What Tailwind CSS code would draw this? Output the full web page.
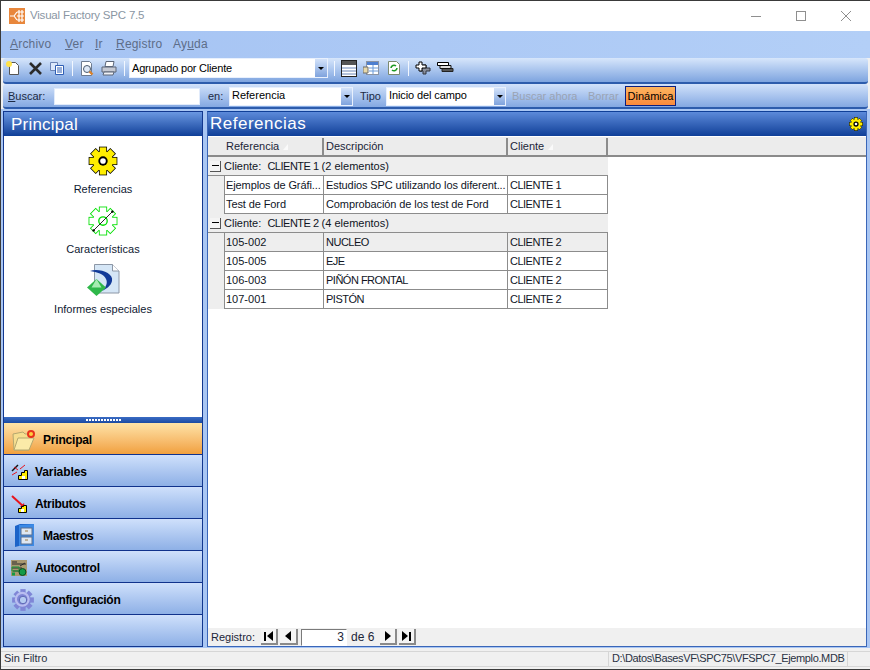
<!DOCTYPE html>
<html lang="es">
<head>
<meta charset="UTF-8">
<title>Visual Factory SPC 7.5</title>
<script src="https://cdn.jsdelivr.net/npm/@tailwindcss/browser@4"></script>
</head>
<body class="font-['Liberation_Sans',sans-serif] text-[11px] text-black bg-[#f0f0f0]">
<svg width="0" height="0" class="absolute">
  <defs>
    <g id="gear">
      <circle cx="16" cy="16" r="10.5"/>
      <rect x="12.5" y="1.5" width="7" height="6"/>
      <rect x="12.5" y="1.5" width="7" height="6" transform="rotate(45 16 16)"/>
      <rect x="12.5" y="1.5" width="7" height="6" transform="rotate(90 16 16)"/>
      <rect x="12.5" y="1.5" width="7" height="6" transform="rotate(135 16 16)"/>
      <rect x="12.5" y="1.5" width="7" height="6" transform="rotate(180 16 16)"/>
      <rect x="12.5" y="1.5" width="7" height="6" transform="rotate(225 16 16)"/>
      <rect x="12.5" y="1.5" width="7" height="6" transform="rotate(270 16 16)"/>
      <rect x="12.5" y="1.5" width="7" height="6" transform="rotate(315 16 16)"/>
    </g>
  </defs>
</svg>
<div class="w-[870px] h-[670px] overflow-hidden flex flex-col border-l border-t border-[#3a3a3a] bg-[#f0f0f0]">

  <!-- title bar -->
  <div class="h-[30px] shrink-0 bg-white flex items-center pl-[8px] pr-[19px]">
    <svg class="w-[16px] h-[16px]" viewBox="0 0 16 16">
      <rect width="16" height="16" fill="#e8873c"/>
      <path d="M1 8h4M5 8l3-4M5 8l3 4M8 4h7M8 8h7M8 12h7M10 2v12M13 2v12" stroke="#fff" stroke-width="1.2" fill="none"/>
    </svg>
    <span class="ml-[5px] text-[11.5px] text-[#8a96a3] tracking-[-0.2px]">Visual Factory SPC 7.5</span>
    <div class="ml-auto flex items-center gap-[35px]">
      <span class="w-[10px] h-px bg-[#8f8f8f]"></span>
      <span class="w-[10px] h-[10px] border border-[#8f8f8f]"></span>
      <svg class="w-[10px] h-[10px]" viewBox="0 0 10 10"><path d="M0 0l10 10M10 0L0 10" stroke="#8f8f8f" fill="none"/></svg>
    </div>
  </div>

  <!-- menu -->
  <div class="h-[27px] shrink-0 pb-[2px] bg-gradient-to-r from-[#a5c3f3] to-[#b3cff7] flex items-center pl-[9px] text-[12px] text-[#5d6d88] tracking-[0.2px]">
    <span class="w-[55px]"><u>A</u>rchivo</span>
    <span class="w-[30px]"><u>V</u>er</span>
    <span class="w-[21px]"><u>I</u>r</span>
    <span class="w-[57px]"><u>R</u>egistro</span>
    <span>Ay<u>u</u>da</span>
  </div>

  <!-- toolbar -->
  <div class="h-[26px] shrink-0 pb-[4px] mx-[2px] rounded-[3px] border-b-2 border-[#2d5cac] bg-gradient-to-b from-[#d7e6fb] to-[#7ea4df] flex items-center pl-[2px]">
    <svg class="w-[16px] h-[16px] mr-[7px]" viewBox="0 0 16 16">
      <path d="M4.5 2.5h6l3 3v9h-9z" fill="#fff" stroke="#555"/>
      <circle cx="4" cy="4" r="3" fill="#ffe24a"/>
    </svg>
    <svg class="w-[15px] h-[15px] mr-[6px]" viewBox="0 0 15 15"><path d="M2 2l11 11M13 2L2 13" stroke="#2b2b2b" stroke-width="2.6" fill="none"/></svg>
    <svg class="w-[16px] h-[16px] mr-[7px]" viewBox="0 0 16 16">
      <path d="M1.5 2.5h7v8h-7z" fill="#dce8fb" stroke="#6b84b5"/>
      <path d="M6.5 5.5h8v9h-8z" fill="#fff" stroke="#2f5fb5"/>
      <path d="M8 8h5M8 10h5M8 12h5" stroke="#2f5fb5" fill="none"/>
    </svg>
    <span class="w-px h-[15px] bg-[#f2f7ff] mr-[7px]"></span>
    <svg class="w-[16px] h-[17px] mr-[5px]" viewBox="0 0 16 17">
      <path d="M1.5 1.5h8l2 2v12h-10z" fill="#fff" stroke="#6d7b90"/>
      <circle cx="7" cy="9" r="3.5" fill="#dfe9f7" stroke="#4a5a70"/>
      <path d="M9.5 11.5l3 3" stroke="#d9822b" stroke-width="2.4"/>
    </svg>
    <svg class="w-[16px] h-[16px] mr-[7px]" viewBox="0 0 16 16">
      <path d="M5 1.5h8l-1 5H4z" fill="#fff" stroke="#5c6678"/>
      <path d="M1 7h14v5H1z" fill="#c5c9d3" stroke="#5c6678"/>
      <path d="M3 12h10l-1 3H2z" fill="#eef0f5" stroke="#5c6678"/>
    </svg>
    <span class="w-px h-[15px] bg-[#f2f7ff] mr-[4px]"></span>
    <div class="w-[199px] h-[20px] bg-white flex items-center pl-[2px] border border-[#e8f0fd]">
      <span class="flex-1 text-[11px] tracking-[-0.2px]">Agrupado por Cliente</span>
      <span class="w-[12px] h-full bg-gradient-to-b from-[#d4e3fa] to-[#7fa3dd] flex items-center justify-center"><span class="w-0 h-0 border-x-[3px] border-x-transparent border-t-[3px] border-t-black"></span></span>
    </div>
    <span class="w-px h-[15px] bg-[#f2f7ff] mx-[6px]"></span>
    <svg class="w-[16px] h-[17px] mr-[6px]" viewBox="0 0 16 17">
      <rect x=".5" y=".5" width="15" height="16" fill="#fff" stroke="#222"/>
      <rect x="1" y="1" width="14" height="4" fill="#555"/>
      <path d="M1 8h14M1 11h14M1 14h14" stroke="#6b86b8" fill="none"/>
    </svg>
    <svg class="w-[16px] h-[16px] mr-[8px]" viewBox="0 0 16 16">
      <rect x="3.5" y="1.5" width="12" height="13" fill="#fff" stroke="#8a93a3"/>
      <rect x="4" y="2" width="11" height="3" fill="#4d7fd0"/>
      <path d="M6 8h9M6 11h9M10 5v9" stroke="#6b9ad8" fill="none"/>
      <path d="M0 7h5v6H0z" fill="#e8d9a9" stroke="#6d6d6d"/>
    </svg>
    <svg class="w-[14px] h-[16px] mr-[7px]" viewBox="0 0 14 16">
      <path d="M1.5 1.5h8l3 3v10h-11z" fill="#fff" stroke="#7c8a70"/>
      <path d="M4 8a3 3 0 0 1 5-2M10 8a3 3 0 0 1-5 2" stroke="#1d9a25" stroke-width="1.6" fill="none"/>
    </svg>
    <span class="w-px h-[15px] bg-[#f2f7ff] mr-[5px]"></span>
    <svg class="w-[17px] h-[17px] mr-[6px]" viewBox="0 0 17 17">
      <path d="M6 8h3V5h3v3h4v3h-4v3H9v-3H6z" fill="#8a8f9c" stroke="#30343f"/>
      <path d="M2 5h3V2h3v3h4v3H8v3H5V8H2z" fill="#fff" stroke="#000"/>
    </svg>
    <svg class="w-[17px] h-[12px]" viewBox="0 0 17 12">
      <path d="M5 6.5h11v3H5z" fill="#555" stroke="#222"/>
      <path d="M3 3.5h11v3H3z" fill="#ddd" stroke="#111"/>
      <path d="M.5.5h11v3H.5z" fill="#fff" stroke="#000"/>
    </svg>
  </div>

  <!-- search bar -->
  <div class="h-[25px] shrink-0 pt-[1px] mx-[2px] rounded-[3px] border-b-2 border-[#2d5cac] bg-gradient-to-b from-[#d2e2fa] to-[#84a8e2] flex items-center pl-[5px] text-[#1c2a44]">
    <span class="w-[46px] pt-[1px]"><u>B</u>uscar:</span>
    <span class="w-[146px] h-[17px] bg-white border border-[#e1ebfb]"></span>
    <span class="ml-[8px] w-[21px] pt-[1px]">en:</span>
    <div class="w-[124px] h-[19px] bg-white flex items-center pl-[2px] border border-[#e8f0fd]">
      <span class="flex-1 text-black pb-[2px]">Referencia</span>
      <span class="w-[11px] h-full bg-gradient-to-b from-[#d4e3fa] to-[#7fa3dd] flex items-center justify-center"><span class="w-0 h-0 border-x-[3px] border-x-transparent border-t-[3px] border-t-black"></span></span>
    </div>
    <span class="ml-[7px] w-[26px] pt-[1px]">Tipo</span>
    <div class="w-[120px] h-[19px] bg-white flex items-center pl-[2px] border border-[#e8f0fd]">
      <span class="flex-1 text-black pb-[2px] tracking-[-0.1px]">Inicio del campo</span>
      <span class="w-[11px] h-full bg-gradient-to-b from-[#d4e3fa] to-[#7fa3dd] flex items-center justify-center"><span class="w-0 h-0 border-x-[3px] border-x-transparent border-t-[3px] border-t-black"></span></span>
    </div>
    <span class="ml-[6px] w-[76px] text-[#9aa3b3] pt-[1px]">Buscar ahora</span>
    <span class="w-[37px] text-[#9aa3b3] pt-[1px]">Borrar</span>
    <span class="w-[51px] h-[20px] flex items-center justify-center border border-[#0b1f80] bg-gradient-to-b from-[#fdb45f] to-[#f98a3c] text-black">Dinámica</span>
  </div>

  <!-- main -->
  <div class="h-[539px] shrink-0 bg-[#a9c6f3] flex pl-[2px] pr-[2px] pt-[2px] pb-[1px] gap-[4px]">

    <!-- sidebar -->
    <div class="w-[200px] border border-[#12378f] flex flex-col bg-white">
      <div class="h-[24px] shrink-0 pt-[1px] bg-gradient-to-b from-[#6b98e2] to-[#0f3f98] text-white text-[17px] pl-[7px] flex items-center tracking-[0.2px]">Principal</div>
      <div class="h-[281px] shrink-0 flex flex-col items-center pt-[10px] text-[#101a33]">
        <svg class="w-[30px] h-[30px]" viewBox="0 0 32 32">
          <use href="#gear" fill="#000" stroke="#000" stroke-width="1.6"/>
          <use href="#gear" fill="#ffee00"/>
          <circle cx="16" cy="16" r="5" fill="#000"/>
          <circle cx="16" cy="16" r="3" fill="#fff"/>
        </svg>
        <span class="mt-[5px] h-[17px] leading-[17px]">Referencias</span>
        <svg class="mt-[8px] w-[30px] h-[30px]" viewBox="0 0 32 32">
          <use href="#gear" fill="#00e000" stroke="#00e000" stroke-width="1.8"/>
          <use href="#gear" fill="#fff"/>
          <circle cx="16" cy="16" r="4.5" fill="none" stroke="#00e000" stroke-width="1.4"/>
          <path d="M6 26L26 6" stroke="#000" stroke-width=".9"/>
          <circle cx="6" cy="26" r="1.3"/><circle cx="26" cy="6" r="1.3"/>
        </svg>
        <span class="mt-[5px] h-[17px] leading-[17px]">Características</span>
        <svg class="mt-[6px] w-[33px] h-[33px]" viewBox="0 0 33 33">
          <path d="M7.500 .5h18l6.500 6.500v22H7.500z" fill="#d5e6f6" stroke="#8c97a6"/>
          <path d="M25.500 .5v6.500h6.500" fill="#fff" stroke="#8c97a6"/>
          <path d="M3 7C12 4 27 9 25 17C24 22 19 25 15 27C19 23 21 19 19 15C17 10 10 8 3 7z" fill="#123a98"/>
          <path d="M9.500 15l9.500 8.500-9.500 8.500L0 23.500z" fill="#2fb84a"/>
          <path d="M9.500 15l5 8.500h-10z" fill="#a6ecb0"/>
        </svg>
        <span class="mt-[4px] h-[17px] leading-[17px]">Informes especiales</span>
      </div>
      <div class="h-[6px] shrink-0 bg-gradient-to-b from-[#3a6cc4] to-[#1a4aa2] flex items-center justify-center gap-px">
        <i class="w-[2px] h-[2px] bg-white"></i><i class="w-[2px] h-[2px] bg-white"></i><i class="w-[2px] h-[2px] bg-white"></i><i class="w-[2px] h-[2px] bg-white"></i><i class="w-[2px] h-[2px] bg-white"></i><i class="w-[2px] h-[2px] bg-white"></i><i class="w-[2px] h-[2px] bg-white"></i><i class="w-[2px] h-[2px] bg-white"></i><i class="w-[2px] h-[2px] bg-white"></i><i class="w-[2px] h-[2px] bg-white"></i><i class="w-[2px] h-[2px] bg-white"></i><i class="w-[2px] h-[2px] bg-white"></i>
      </div>
      <div class="h-[32px] shrink-0 pt-[2px] tracking-[-0.2px] border-b border-[#10328c] bg-gradient-to-b from-[#fde3a7] to-[#f1a03c] flex items-center font-bold text-[12px] pl-[7px]">
        <svg class="w-[26px] h-[24px] mr-[6px]" viewBox="0 0 26 24">
          <path d="M2 6l10-2 2 2 7 0-3 16H3z" fill="#f6de8f" stroke="#b5a870"/>
          <path d="M3 22L7 10h16l-5 12z" fill="#fbeaa8" stroke="#b5a870"/>
          <circle cx="20" cy="6" r="4" fill="#e8331d"/><circle cx="20" cy="6" r="2" fill="#ffd040"/>
        </svg>Principal</div>
      <div class="h-[32px] shrink-0 pt-[2px] tracking-[-0.1px] border-b border-[#10328c] bg-gradient-to-b from-[#cfe0fb] to-[#8eb0e6] flex items-center font-bold text-[12px] pl-[7px]">
        <svg class="w-[18px] h-[18px] mr-[6px]" viewBox="0 0 18 18">
          <path d="M1 8l6-6" stroke="#111" stroke-width="1.5"/><path d="M3 4l4 3M1 12l5-3" stroke="#e8141c"/><path d="M9 6l5-4" stroke="#e8141c"/>
          <path d="M7.500 16.500v-4h3v-3h3v-2h3v9z" fill="#ffee00" stroke="#000"/><rect x="11" y="13" width="3" height="3" fill="#fff"/>
        </svg>Variables</div>
      <div class="h-[32px] shrink-0 pt-[2px] tracking-[-0.3px] border-b border-[#10328c] bg-gradient-to-b from-[#cfe0fb] to-[#8eb0e6] flex items-center font-bold text-[12px] pl-[7px]">
        <svg class="w-[18px] h-[18px] mr-[6px]" viewBox="0 0 18 18">
          <path d="M1 1l12 11" stroke="#e8141c" stroke-width="2"/><path d="M14 13l-5-1 4-4z" fill="#e8141c"/>
          <path d="M7.500 17.500v-4h3v-2h2v-1h3v7z" fill="#ffee00" stroke="#000"/><rect x="10" y="14" width="3" height="3" fill="#fff"/>
        </svg>Atributos</div>
      <div class="h-[32px] shrink-0 pt-[2px] tracking-[-0.3px] border-b border-[#10328c] bg-gradient-to-b from-[#cfe0fb] to-[#8eb0e6] flex items-center font-bold text-[12px] pl-[10px]">
        <svg class="w-[20px] h-[24px] mr-[9px]" viewBox="0 0 20 24">
          <path d="M1 2l5-2h14v22H5l-4 1z" fill="#1c63c8"/>
          <path d="M5 1l15-1v22H5z" fill="#3c8ae6"/>
          <rect x="7" y="4" width="11" height="7" fill="#dfe7f2" stroke="#5a6f90"/>
          <rect x="7" y="13" width="11" height="7" fill="#dfe7f2" stroke="#5a6f90"/>
          <path d="M11 7h3M11 16h3" stroke="#a07a40"/>
        </svg>Maestros</div>
      <div class="h-[32px] shrink-0 pt-[2px] tracking-[-0.3px] border-b border-[#10328c] bg-gradient-to-b from-[#cfe0fb] to-[#8eb0e6] flex items-center font-bold text-[12px] pl-[7px]">
        <svg class="w-[16px] h-[16px] mr-[8px]" viewBox="0 0 16 16">
          <rect width="16" height="16" fill="#a89870"/>
          <path d="M1 4h14M1 2h5M9 6l5-3M1 8h10M2 11h8" stroke="#2c2c2c"/>
          <path d="M1 7h7v4H1z" fill="none" stroke="#1a9a3c"/>
          <circle cx="11.5" cy="12" r="3.5" fill="#149a46" stroke="#0a4a20"/>
          <rect x="1" y="12.5" width="3" height="3" fill="#149a46"/>
        </svg>Autocontrol</div>
      <div class="h-[32px] shrink-0 pt-[2px] tracking-[-0.3px] border-b border-[#10328c] bg-gradient-to-b from-[#cfe0fb] to-[#8eb0e6] flex items-center font-bold text-[12px] pl-[7px]">
        <svg class="w-[24px] h-[24px] mr-[8px]" viewBox="0 0 32 32">
          <use href="#gear" fill="#7f86d6"/>
          <circle cx="15" cy="15" r="8.5" fill="none" stroke="#b9bdf0" stroke-width="3"/>
          <circle cx="16" cy="16" r="5" fill="#b4cbf1" stroke="#565cae" stroke-width="1.2"/>
        </svg>Configuración</div>
      <div class="flex-1 bg-gradient-to-b from-[#cfe0fb] to-[#8eb0e6]"></div>
    </div>

    <!-- references panel -->
    <div class="w-[660px] border border-[#3a66b8] border-t-[#0f3f98] flex flex-col bg-white">
      <div class="h-[24px] shrink-0 bg-gradient-to-b from-[#5c8ada] to-[#0f3f98] text-white text-[17px] pl-[2px] pr-[3px] flex items-center justify-between tracking-[0.5px]">
        <span>Referencias</span>
        <svg class="w-[14px] h-[14px]" viewBox="0 0 32 32">
          <use href="#gear" fill="#000" stroke="#000" stroke-width="2"/>
          <use href="#gear" fill="#ffee00"/>
          <circle cx="16" cy="16" r="6" fill="#000"/>
          <circle cx="16" cy="16" r="3" fill="#fff"/>
        </svg>
      </div>

      <!-- column headers -->
      <div class="h-[21px] shrink-0 pt-[1px] flex bg-[#ececec] border-b-2 border-[#8a8a8a] border-t border-t-white text-[#1b2538]">
        <div class="w-[116px] pl-[18px] flex items-center gap-[4px] border-r-2 border-[#8c8c8c]">Referencia <span class="w-0 h-0 border-l-[5px] border-l-transparent border-b-[6px] border-b-[#fafafa]"></span></div>
        <div class="w-[184px] pl-[2px] flex items-center border-r-2 border-[#8c8c8c]">Descripción</div>
        <div class="w-[100px] pl-[2px] flex items-center gap-[4px] border-r-2 border-[#8c8c8c]">Cliente <span class="w-0 h-0 border-l-[5px] border-l-transparent border-b-[6px] border-b-[#fafafa]"></span></div>
      </div>

      <!-- rows -->
      <div class="flex-1 min-h-0 w-[400px] text-[#10151f] whitespace-nowrap">
        <div class="h-[19px] bg-[#eeeeee] flex items-center pl-[2px] border-b border-[#8c8c8c] w-[400px]">
          <span class="w-[11px] h-[11px] bg-[#f4f4f4] border-r border-b border-[#555] flex items-center justify-center mr-[3px]"><i class="w-[7px] h-px bg-black"></i></span>Cliente:&nbsp;&nbsp;<span class="tracking-[-0.5px]">CLIENTE 1</span>&nbsp;(2 elementos)
        </div>
        <div class="flex h-[19px]">
          <div class="w-[16px] bg-[#eeeeee]"></div>
          <div class="w-[100px] pl-[1px] flex items-center bg-white border-x border-b border-[#8c8c8c] tracking-[-0.1px]">Ejemplos de Gráfi...</div>
          <div class="w-[184px] pl-[2px] flex items-center bg-white border-r border-b border-[#8c8c8c] tracking-[-0.1px]">Estudios SPC utilizando los diferent...</div>
          <div class="w-[100px] pl-[2px] flex items-center bg-white border-r border-b border-[#8c8c8c] tracking-[-0.5px]">CLIENTE 1</div>
        </div>
        <div class="flex h-[19px]">
          <div class="w-[16px] bg-[#eeeeee]"></div>
          <div class="w-[100px] pl-[1px] flex items-center bg-white border-x border-b border-[#8c8c8c] tracking-[-0.1px]">Test de Ford</div>
          <div class="w-[184px] pl-[2px] flex items-center bg-white border-r border-b border-[#8c8c8c] tracking-[-0.1px]">Comprobación de los test de Ford</div>
          <div class="w-[100px] pl-[2px] flex items-center bg-white border-r border-b border-[#8c8c8c] tracking-[-0.5px]">CLIENTE 1</div>
        </div>
        <div class="h-[19px] bg-[#eeeeee] flex items-center pl-[2px] border-b border-[#8c8c8c] w-[400px]">
          <span class="w-[11px] h-[11px] bg-[#f4f4f4] border-r border-b border-[#555] flex items-center justify-center mr-[3px]"><i class="w-[7px] h-px bg-black"></i></span>Cliente:&nbsp;&nbsp;<span class="tracking-[-0.5px]">CLIENTE 2</span>&nbsp;(4 elementos)
        </div>
        <div class="flex h-[19px]">
          <div class="w-[16px] bg-[#eeeeee]"></div>
          <div class="w-[100px] pl-[1px] flex items-center bg-[#eeeeee] border-x border-b border-[#8c8c8c]">105-002</div>
          <div class="w-[184px] pl-[2px] flex items-center bg-[#eeeeee] border-r border-b border-[#8c8c8c] tracking-[-0.5px]">NUCLEO</div>
          <div class="w-[100px] pl-[2px] flex items-center bg-[#eeeeee] border-r border-b border-[#8c8c8c] tracking-[-0.5px]">CLIENTE 2</div>
        </div>
        <div class="flex h-[19px]">
          <div class="w-[16px] bg-[#eeeeee]"></div>
          <div class="w-[100px] pl-[1px] flex items-center bg-white border-x border-b border-[#8c8c8c]">105-005</div>
          <div class="w-[184px] pl-[2px] flex items-center bg-white border-r border-b border-[#8c8c8c] tracking-[-0.5px]">EJE</div>
          <div class="w-[100px] pl-[2px] flex items-center bg-white border-r border-b border-[#8c8c8c] tracking-[-0.5px]">CLIENTE 2</div>
        </div>
        <div class="flex h-[19px]">
          <div class="w-[16px] bg-[#eeeeee]"></div>
          <div class="w-[100px] pl-[1px] flex items-center bg-white border-x border-b border-[#8c8c8c]">106-003</div>
          <div class="w-[184px] pl-[2px] flex items-center bg-white border-r border-b border-[#8c8c8c] tracking-[-0.5px]">PIÑÓN FRONTAL</div>
          <div class="w-[100px] pl-[2px] flex items-center bg-white border-r border-b border-[#8c8c8c] tracking-[-0.5px]">CLIENTE 2</div>
        </div>
        <div class="flex h-[19px]">
          <div class="w-[16px] bg-[#eeeeee]"></div>
          <div class="w-[100px] pl-[1px] flex items-center bg-white border-x border-b border-[#8c8c8c]">107-001</div>
          <div class="w-[184px] pl-[2px] flex items-center bg-white border-r border-b border-[#8c8c8c] tracking-[-0.5px]">PISTÓN</div>
          <div class="w-[100px] pl-[2px] flex items-center bg-white border-r border-b border-[#8c8c8c] tracking-[-0.5px]">CLIENTE 2</div>
        </div>
      </div>

      <!-- record navigator -->
      <div class="h-[18px] shrink-0 bg-[#f0f0f0] flex items-center pl-[3px] text-[#1b2538]">
        <span class="w-[50px]">Registro:</span>
        <span class="w-[17px] h-[16px] bg-[#f4f4f4] border-r-2 border-b-2 border-[#8a8a8a] flex items-center justify-center"><i class="w-[2px] h-[9px] bg-black"></i><i class="w-0 h-0 ml-px border-y-[5px] border-y-transparent border-r-[6px] border-r-black"></i></span>
        <span class="ml-[2px] w-[18px] h-[16px] bg-[#f4f4f4] border-r-2 border-b-2 border-[#8a8a8a] flex items-center justify-center"><i class="w-0 h-0 border-y-[5px] border-y-transparent border-r-[6px] border-r-black"></i></span>
        <span class="ml-[3px] w-[46px] h-[17px] bg-white border border-[#7a7a7a] border-b-white border-r-white flex items-center justify-end pr-[2px] text-[12px]">3</span>
        <span class="ml-[4px] w-[29px] text-[12px]">de 6</span>
        <span class="w-[17px] h-[16px] bg-[#f4f4f4] border-r-2 border-b-2 border-[#8a8a8a] flex items-center justify-center"><i class="w-0 h-0 border-y-[5px] border-y-transparent border-l-[6px] border-l-black"></i></span>
        <span class="ml-[2px] w-[17px] h-[16px] bg-[#f4f4f4] border-r-2 border-b-2 border-[#8a8a8a] flex items-center justify-center"><i class="w-0 h-0 mr-px border-y-[5px] border-y-transparent border-l-[6px] border-l-black"></i><i class="w-[2px] h-[9px] bg-black"></i></span>
      </div>
    </div>
  </div>

  <!-- status bar -->
  <div class="h-[4px] shrink-0 bg-[#f0f0f0] border-b border-[#d6d6d6]"></div>
  <div class="h-[14px] shrink-0 flex items-center text-[11px] pl-[3px] text-[#2a3243]">
    <span class="w-[604px] pb-[2px]">Sin Filtro</span>
    <span class="w-[240px] h-[14px] leading-[12px] pl-[3px] border-x border-[#d6d6d6] whitespace-nowrap tracking-[-0.37px]">D:\Datos\BasesVF\SPC75\VFSPC7_Ejemplo.MDB</span>
  </div>
  <div class="h-[3px] shrink-0 bg-[#f0f0f0] border-t border-[#d6d6d6]"></div>
  <div class="flex-1 bg-[#3a3a3a]"></div>
</div>
</body>
</html>
